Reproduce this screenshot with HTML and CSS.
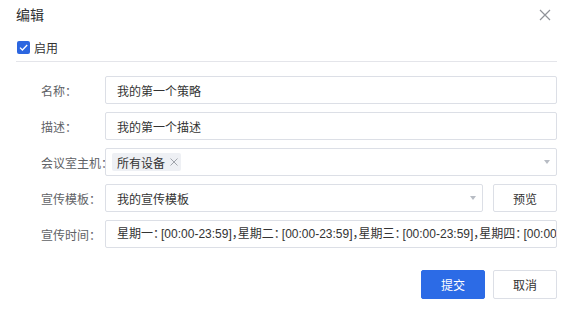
FILE: index.html
```html
<!DOCTYPE html>
<html lang="zh-CN">
<head>
    <meta charset="UTF-8">
    <title>编辑</title>
    <link rel="stylesheet" href="styles.css">
</head>
<body>
    <div class="dialog">
        <div class="header">
            <span class="title">编辑</span>
            <svg class="close" width="12" height="12" viewBox="0 0 12 12">
                <path d="M1 1L11 11M11 1L1 11" stroke="#909399" stroke-width="1.2" fill="none"/>
            </svg>
        </div>
        <div class="enable">
            <span class="checkbox">
                <svg width="13" height="13" viewBox="0 0 13 13">
                    <path d="M3 6.6L5.4 9L10.2 4" stroke="#fff" stroke-width="1.3" fill="none"/>
                </svg>
            </span>
            <span>启用</span>
        </div>
        <div class="form">
            <div class="row">
                <label>名称：</label>
                <div class="field">我的第一个策略</div>
            </div>
            <div class="row">
                <label>描述：</label>
                <div class="field">我的第一个描述</div>
            </div>
            <div class="row">
                <label>会议室主机：</label>
                <div class="field select">
                    <span class="tag">所有设备<svg class="tag-x" width="8" height="8" viewBox="0 0 8 8"><path d="M0.5 0.5L7.5 7.5M7.5 0.5L0.5 7.5" stroke="#a0a4ab" stroke-width="1" fill="none"/></svg></span>
                    <span class="arrow"></span>
                </div>
            </div>
            <div class="row">
                <label>宣传模板：</label>
                <div class="field select">
                    <span>我的宣传模板</span>
                    <span class="arrow"></span>
                </div>
                <button class="btn">预览</button>
            </div>
            <div class="row">
                <label>宣传时间：</label>
                <div class="field clip">星期一<span class="colon">：</span>[00:00-23:59]<span class="comma">，</span>星期二<span class="colon">：</span>[00:00-23:59]<span class="comma">，</span>星期三<span class="colon">：</span>[00:00-23:59]<span class="comma">，</span>星期四<span class="colon">：</span>[00:00-23:59]</div>
            </div>
        </div>
        <div class="footer">
            <button class="btn primary">提交</button>
            <button class="btn">取消</button>
        </div>
    </div>
</body>
</html>
```

FILE: styles.css
```css
body {
    margin: 0;
    font-family: "Liberation Sans", "Noto Sans CJK SC", sans-serif;
    font-size: 12px;
    color: #333;
    background: #fff;
}
.dialog {
    width: 575px;
    height: 313px;
    box-sizing: border-box;
    padding: 0 18px 0 16px;
}
.header {
    display: flex;
    justify-content: space-between;
    align-items: center;
    height: 30px;
}
.title {
    font-size: 14px;
    color: #303133;
    line-height: 20px;
}
.close {
    margin-right: 6px;
}
.enable {
    display: flex;
    align-items: center;
    gap: 4px;
    margin-top: 10px;
    padding: 0 0 6px 1px;
    border-bottom: 1px solid #e4e5ea;
    height: 15px;
}
.checkbox {
    width: 13px;
    height: 13px;
    background: #2c66e0;
    border-radius: 2px;
    display: flex;
}
.form {
    padding: 14px 0 0 25px;
    display: flex;
    flex-direction: column;
    gap: 8px;
}
.row {
    display: flex;
    align-items: center;
    height: 28px;
}
.row label {
    width: 64px;
    color: #606266;
    flex-shrink: 0;
    white-space: nowrap;
}
.field {
    flex: 1;
    height: 28px;
    box-sizing: border-box;
    border: 1px solid #dcdfe6;
    border-radius: 2px;
    padding: 0 11px;
    display: flex;
    align-items: center;
    min-width: 0;
}
.select {
    justify-content: space-between;
    padding: 0 6px 0 11px;
}
.clip {
    display: block;
    line-height: 26px;
    white-space: nowrap;
    overflow: hidden;
}
.colon {
    letter-spacing: -4px;
}
.comma {
    letter-spacing: -6px;
}
.tag {
    display: flex;
    align-items: center;
    background: #eef0f4;
    border-radius: 2px;
    height: 18px;
    padding: 0 3px 0 5px;
    margin-left: -5px;
}
.tag-x {
    margin-left: 5px;
}
.arrow {
    width: 0;
    height: 0;
    border-left: 3.5px solid transparent;
    border-right: 3.5px solid transparent;
    border-top: 4px solid #b8bcc4;
}
.btn {
    width: 64px;
    height: 28px;
    border: 1px solid #dcdfe6;
    border-radius: 2px;
    background: #fff;
    color: #333;
    font-family: inherit;
    font-size: 12px;
    margin-left: 10px;
    padding: 0;
    flex-shrink: 0;
}
.footer {
    display: flex;
    justify-content: flex-end;
    gap: 8px;
    margin-top: 22px;
}
.footer .btn {
    margin-left: 0;
    height: 29px;
}
.btn.primary {
    background: #2c6be6;
    border-color: #2c6be6;
    color: #fff;
}
```
